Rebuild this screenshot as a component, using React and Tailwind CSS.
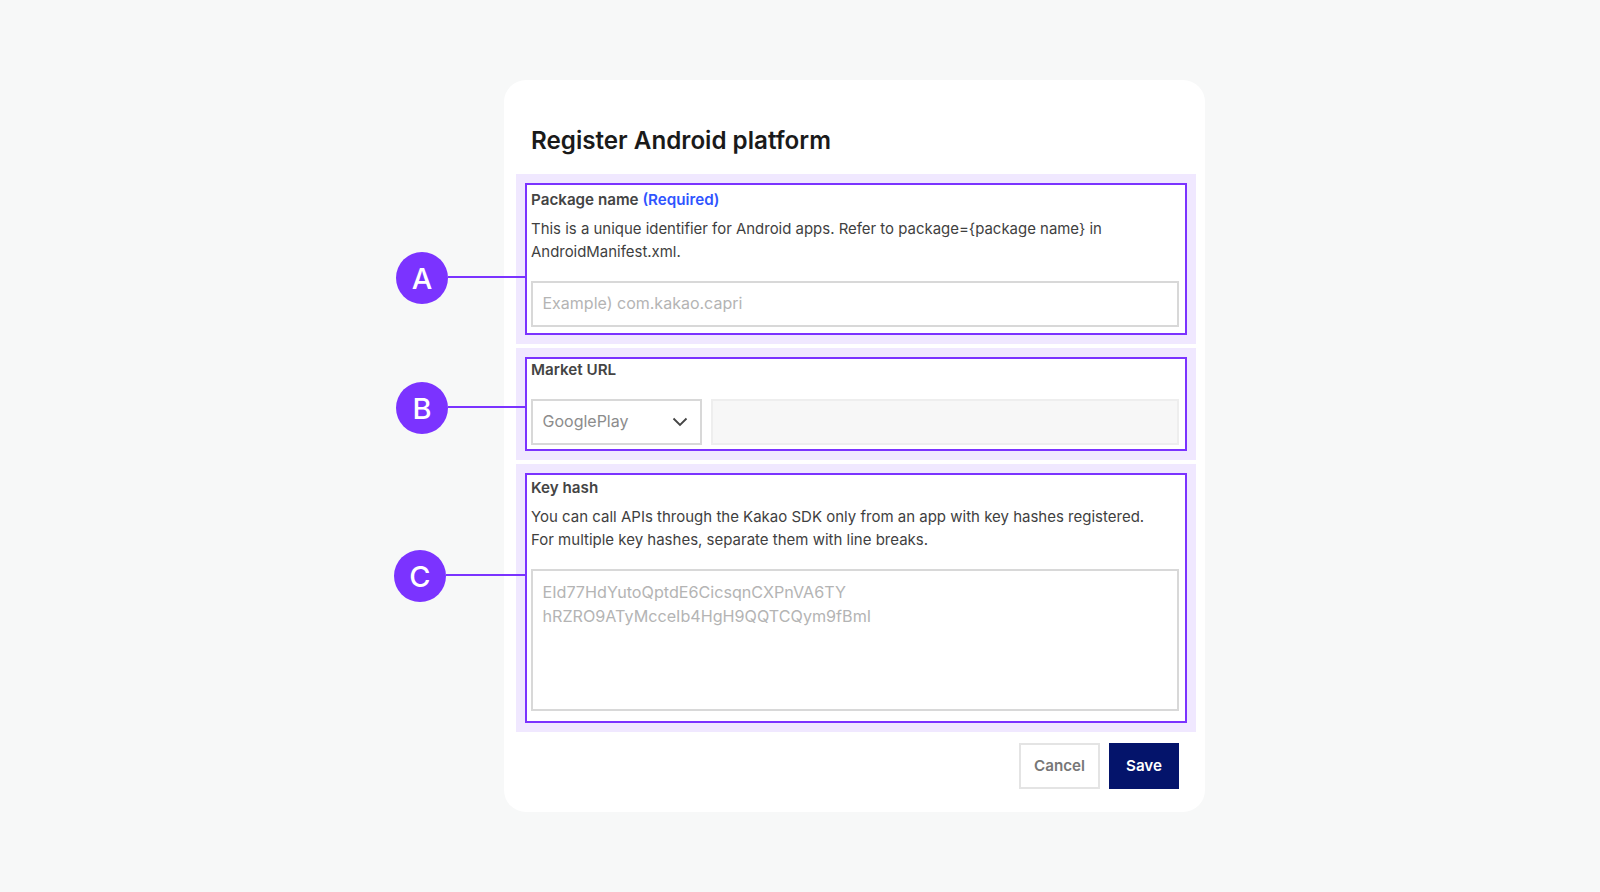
function Callout({ letter, className }) {
  return (
    <div className={`absolute flex items-center ${className}`}>
      <div className="flex h-[52px] w-[52px] items-center justify-center rounded-full bg-[#7b33ff] text-[29px] font-medium leading-none text-white">
        {letter}
      </div>
      <div className="-mt-[3px] h-[2px] flex-1 bg-[#7b33ff]" />
    </div>
  );
}

function Section({ className, innerClassName, children }) {
  return (
    <section className={`bg-[#f0e8ff] p-[9px] ${className}`}>
      <div className={`border-2 border-[#7b33ff] bg-white pl-[4px] pr-[6px] ${innerClassName}`}>
        {children}
      </div>
    </section>
  );
}

export default function App() {
  return (
    <div className="relative h-[892px] w-[1600px] overflow-hidden bg-[#f7f8f8] pl-[504px] pt-[80px] font-['Inter',sans-serif] text-[#3f3f3f]">
      <div className="w-[701px] h-[732px] rounded-[22px] bg-white pl-[12px] pr-[9px]">
        <h1 className="pl-[15px] pt-[46px] text-[24.2px] font-semibold leading-[30px] text-[#1a1a1a]">
          Register Android platform
        </h1>
        <div className="mt-[18px] flex flex-col gap-[4px]">
          <Section innerClassName="h-[152px]">
            <div className="pt-[4px] text-[15.2px] font-semibold leading-[22px] text-[#444444]">
              Package name <span className="text-[#2f54ff]">(Required)</span>
            </div>
            <p className="mt-[7px] text-[14.95px] leading-[23px]">
              This is a unique identifier for Android apps. Refer to package={"{package name}"} in
              <br />
              AndroidManifest.xml.
            </p>
            <div className="mt-[17px] flex h-[46px] items-center border-2 border-[#d8d8d8] pb-[2px] pl-[9.5px] text-[16px] text-[#b4b4b4]">
              Example) com.kakao.capri
            </div>
          </Section>
          <Section innerClassName="h-[94px]">
            <div className="text-[15.2px] font-semibold leading-[22px] text-[#444444]">Market URL</div>
            <div className="mt-[18px] flex gap-[9px]">
              <div className="flex h-[46px] w-[171px] items-center justify-between border-2 border-[#d8d8d8] pb-[2px] pl-[9.5px] pr-[12px] text-[16px] text-[#8c8c8c]">
                GooglePlay
                <svg className="mt-[2px]" width="16" height="10" viewBox="0 0 16 10" fill="none" stroke="#444" strokeWidth="1.8">
                  <path d="M1.5 1.5 8 8l6.5-6.5" />
                </svg>
              </div>
              <div className="h-[46px] flex-1 border-2 border-[#eeeeee] bg-[#f7f7f7]" />
            </div>
          </Section>
          <Section innerClassName="h-[250px]">
            <div className="pt-[2px] text-[15.2px] font-semibold leading-[22px] text-[#444444]">Key hash</div>
            <p className="mt-[6px] text-[15px] leading-[23px]">
              You can call APIs through the Kakao SDK only from an app with key hashes registered.
              <br />
              For multiple key hashes, separate them with line breaks.
            </p>
            <div className="mt-[18px] h-[142px] border-2 border-[#d8d8d8] pl-[9.5px] pt-[9px] text-[16.15px] leading-[24px] text-[#b4b4b4]">
              EId77HdYutoQptdE6CicsqnCXPnVA6TY
              <br />
              hRZRO9ATyMcceIb4HgH9QQTCQym9fBmI
            </div>
          </Section>
        </div>
        <div className="mt-[11px] flex justify-end gap-[9px] pr-[17px]">
          <button className="h-[46px] w-[81px] border-2 border-[#e4e4e4] bg-white text-[15.2px] font-semibold text-[#777777]">
            Cancel
          </button>
          <button className="h-[46px] w-[70px] bg-[#04146b] text-[15.2px] font-semibold text-white">
            Save
          </button>
        </div>
      </div>
      <Callout letter="A" className="left-[396px] top-[252px] w-[130px]" />
      <Callout letter="B" className="left-[396px] top-[382px] w-[130px]" />
      <Callout letter="C" className="left-[394px] top-[550px] w-[132px]" />
    </div>
  );
}
